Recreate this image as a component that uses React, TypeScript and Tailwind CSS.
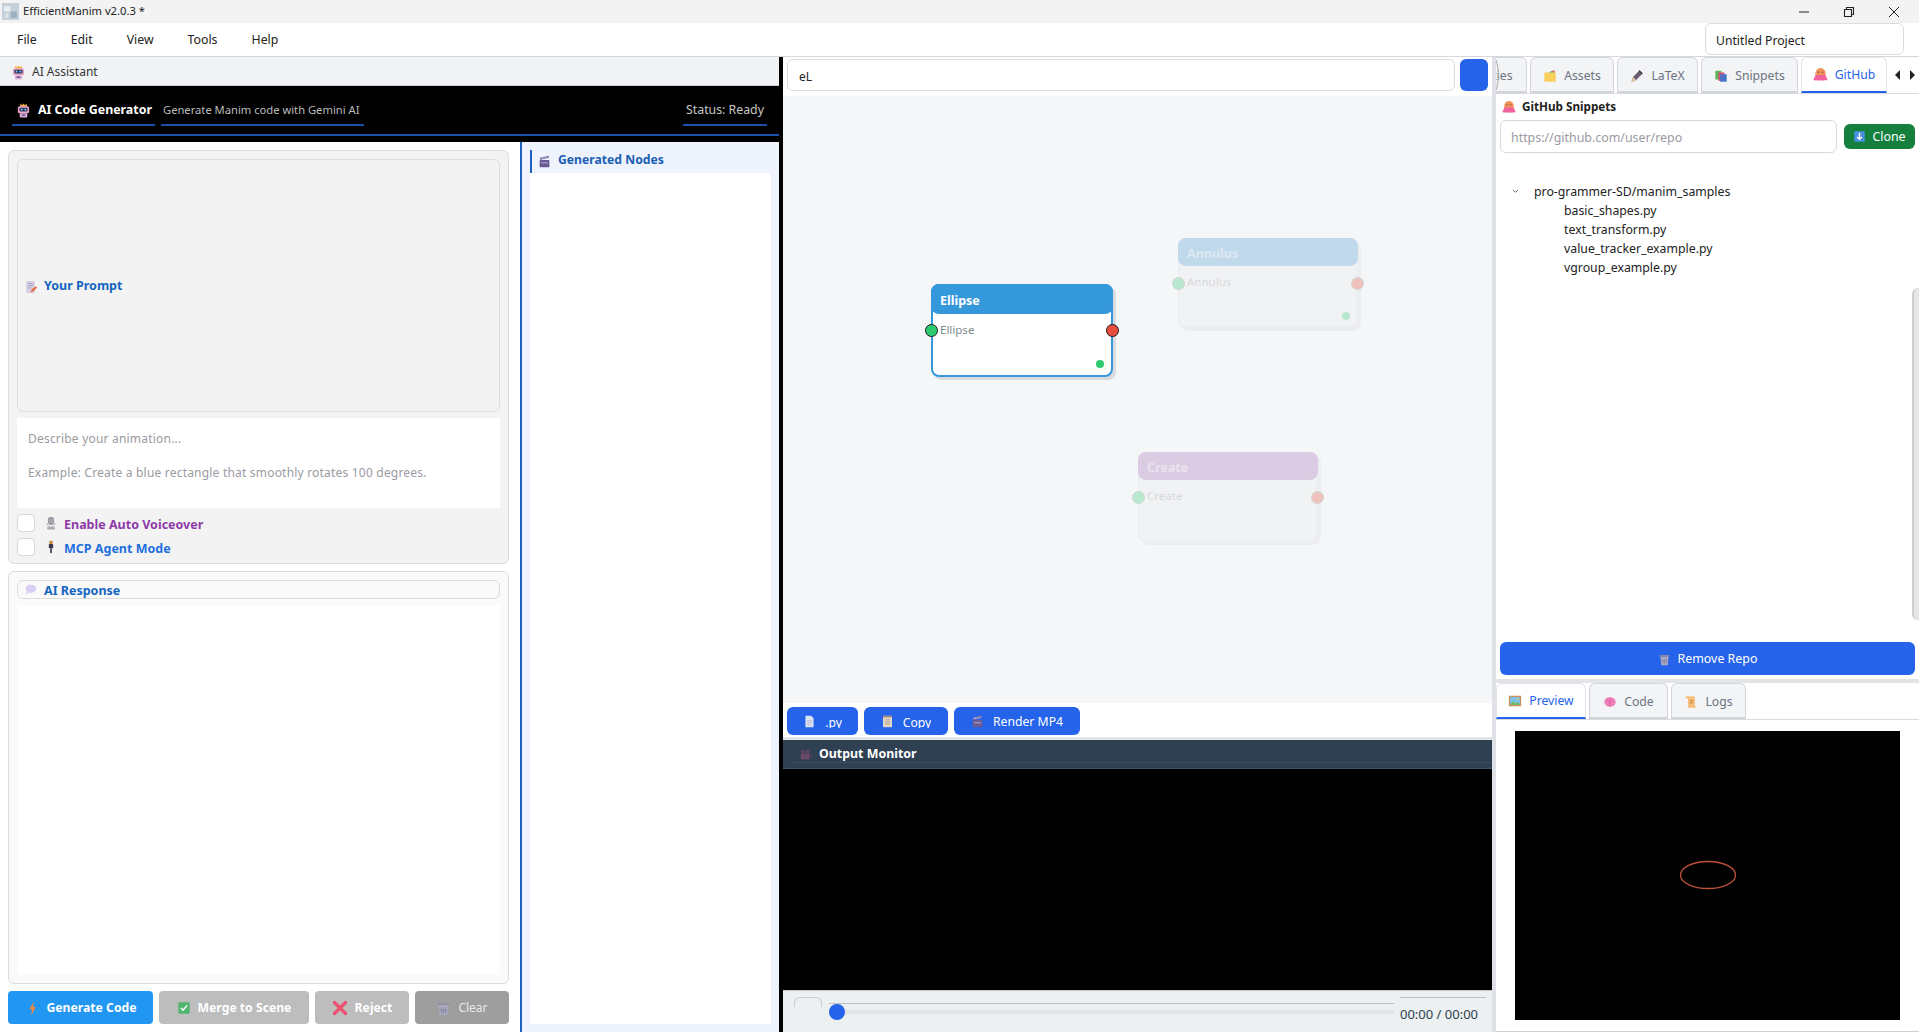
import React from "react";

type IP = { className?: string };
const S = ({ className = "w-[14px] h-[14px]", children }: IP & { children: React.ReactNode }) => (
  <svg viewBox="0 0 16 16" className={`${className} shrink-0`}>{children}</svg>
);

const Robot = ({ className }: IP) => (
  <S className={className}>
    <path d="M4.500 0.500l2 2L8 0.500l1.500 2 2-2V4h-7z" fill="#f2b632" />
    <rect x="2" y="3.500" width="12" height="7.500" rx="1.800" fill="#e9a6c6" />
    <rect x="3.500" y="5" width="9" height="4" rx="1.500" fill="#2f3a66" />
    <circle cx="6" cy="7" r="1" fill="#7fd0f0" />
    <circle cx="10" cy="7" r="1" fill="#7fd0f0" />
    <rect x="4" y="11" width="8" height="4.500" rx="1" fill="#e4b4dc" />
    <rect x="6" y="12.200" width="4" height="1.500" fill="#5a4a80" />
  </S>
);
const Clapper = ({ className }: IP) => (
  <S className={className}>
    <rect x="2" y="6" width="12" height="9" rx="1" fill="#6a5a96" />
    <path d="M2 3.500L13 1l.7 2.500L2.700 6z" fill="#8b7cb0" />
    <path d="M5 3l1.500 2M8.500 2.300l1.500 2" stroke="#ddd" strokeWidth="1" />
    <rect x="4" y="9" width="8" height="1.200" fill="#b9aed0" />
  </S>
);
const PromptIcon = ({ className }: IP) => (
  <S className={className}>
    <rect x="2.500" y="1" width="10" height="14" rx="1" fill="#d6d0e4" />
    <path d="M4.500 4h6M4.500 6.500h6M4.500 9h4" stroke="#a49bbd" strokeWidth="1" />
    <path d="M7.500 14l1-3 5-4 1.500 1.500-4.500 4.500z" fill="#ee6a3c" />
  </S>
);
const Mic = ({ className }: IP) => (
  <S className={className}>
    <rect x="4.500" y="1" width="7" height="9" rx="3.200" fill="#8d8d96" />
    <path d="M5 3.500h6M5 5.500h6M5 7.500h6" stroke="#c9c9d0" strokeWidth=".8" />
    <path d="M3.500 8c0 3 2 4.500 4.500 4.500S12.500 11 12.500 8" stroke="#a8a8b0" fill="none" />
    <rect x="3.500" y="12.500" width="9" height="2.800" rx="1" fill="#aaaab2" />
  </S>
);
const Plug = ({ className }: IP) => (
  <S className={className}>
    <rect x="6" y="1" width="4" height="3.500" fill="#c98a3a" />
    <rect x="5.500" y="4.500" width="5" height="5" rx="1" fill="#3d3550" />
    <rect x="7" y="9.500" width="2" height="5.500" fill="#4a4164" />
  </S>
);
const Bubble = ({ className }: IP) => (
  <S className={className}>
    <ellipse cx="8.500" cy="7" rx="6.500" ry="5" fill="#d8cdf2" />
    <path d="M3.500 10L2 13.500 7 11.500z" fill="#d8cdf2" />
  </S>
);
const Bolt = ({ className }: IP) => (
  <S className={className}>
    <path d="M9.500 0.500L4.500 9h3L6.500 15.500l5-9h-3z" fill="#f08a3c" />
  </S>
);
const Check = ({ className }: IP) => (
  <S className={className}>
    <rect x="1.500" y="1.500" width="13" height="13" rx="1" fill="#4fb56e" />
    <path d="M4.500 8l2.500 2.500 4.500-5.500" stroke="#fff" strokeWidth="1.700" fill="none" />
  </S>
);
const Cross = ({ className }: IP) => (
  <S className={className}>
    <path d="M2.500 2.500l11 11M13.500 2.500l-11 11" stroke="#ef4f6e" strokeWidth="3.200" strokeLinecap="round" />
  </S>
);
const Trash = ({ className }: IP) => (
  <S className={className}>
    <path d="M2 2.500h12v2H2z" fill="#8e8ca6" />
    <path d="M3 4.500h10l-1 10.500H4z" fill="#aeadc4" />
    <path d="M5.500 6l.500 8M8 6v8M10.500 6l-.500 8M4 8.500l8 3M12 8.500l-8 3" stroke="#7f7d9c" strokeWidth=".6" />
  </S>
);
const Octopus = ({ className }: IP) => (
  <S className={className}>
    <path d="M2.500 9C2 4 4.800 1 8 1s6 3 5.500 8z" fill="#f0925a" />
    <path d="M3 8.500h10l2.300 4c.4 2-2.300 2.500-2.800 1.200-.5 1.300-2.500 1.300-3 0-.5 1.300-2.500 1.300-3 0-.5 1.300-2.500 1.300-3 0-.5 1.300-3.200.8-2.800-1.200z" fill="#f2609e" />
    <circle cx="6" cy="5.500" r=".7" fill="#5a3030" />
    <circle cx="10" cy="5.500" r=".7" fill="#5a3030" />
  </S>
);
const Folder = ({ className }: IP) => (
  <S className={className}>
    <rect x="1.500" y="4" width="13" height="10.500" rx="1" fill="#f7cf5a" />
    <path d="M6 4l6-2.500 1 2.500z" fill="#5fb86a" />
    <path d="M9 3.500l4-2 .800 2.500z" fill="#ef6a5a" />
  </S>
);
const Pen = ({ className }: IP) => (
  <S className={className}>
    <path d="M1.500 15l2-6L11 1.500 14.500 5 7 12.500z" fill="#6b5b70" />
    <path d="M1.500 15l2-6 3.500 3.500z" fill="#e6c8a8" />
    <path d="M10 2.500L13.500 6l1-1L11 1.500z" fill="#3b3448" />
  </S>
);
const Books = ({ className }: IP) => (
  <S className={className}>
    <rect x="1.500" y="2" width="7" height="10" fill="#5cb85c" />
    <rect x="5" y="4" width="7" height="9.500" fill="#d94f7a" />
    <rect x="7" y="6" width="7.500" height="8.500" fill="#4a72c4" />
  </S>
);
const Down = ({ className }: IP) => (
  <S className={className}>
    <rect x="1.500" y="1.500" width="13" height="13" rx="1" fill="#4a90e2" />
    <path d="M8 3.500v8M5 8.500l3 3 3-3" stroke="#fff" strokeWidth="1.700" fill="none" />
  </S>
);
const Page = ({ className }: IP) => (
  <S className={className}>
    <path d="M3 1h7l3 3v11H3z" fill="#dce3f2" />
    <path d="M5 7h6M5 9.500h6M5 12h4" stroke="#a9b3cc" strokeWidth="1" />
  </S>
);
const Floppy = ({ className }: IP) => (
  <S className={className}>
    <rect x="2.500" y="1" width="11" height="14" fill="#e6d8c6" />
    <rect x="2.500" y="1" width="11" height="2" fill="#9a8a80" />
    <path d="M5 6h6M5 8.500h6M5 11h6" stroke="#a5957f" strokeWidth="1" />
  </S>
);
const Camera = ({ className }: IP) => (
  <S className={className}>
    <circle cx="5" cy="4.500" r="2.500" fill="#5f4460" />
    <circle cx="10.500" cy="4.500" r="2.500" fill="#5f4460" />
    <rect x="2" y="7" width="11" height="7" rx="1" fill="#6b4a68" />
    <path d="M13 9l2.500-1.500v6L13 12z" fill="#4f3a50" />
  </S>
);
const Picture = ({ className }: IP) => (
  <S className={className}>
    <rect x="1" y="2" width="14" height="12" fill="#c98f5c" />
    <rect x="2.500" y="3.500" width="11" height="9" fill="#7cc4ec" />
    <path d="M2.500 12.500L6 8l3 3 2-2 2.500 3.500z" fill="#6cbb5a" />
    <circle cx="11" cy="5.500" r="1" fill="#f7d04a" />
  </S>
);
const Brain = ({ className }: IP) => (
  <S className={className}>
    <ellipse cx="8" cy="8" rx="6.500" ry="5.500" fill="#ef7fb8" />
    <path d="M8 3v10M4.500 6c1.500 0 2 1 2 2M11.500 6c-1.500 0-2 1-2 2" stroke="#d9589c" strokeWidth=".8" fill="none" />
  </S>
);
const Scroll = ({ className }: IP) => (
  <S className={className}>
    <path d="M2 1.500h9c1 0 1.500.700 1.500 1.500v10h2c0 1-.500 1.500-1.500 1.500H6c-1 0-1.500-.700-1.500-1.500V4H2z" fill="#f6bf7e" />
    <path d="M6.500 6.500h4M6.500 9h4" stroke="#c9772f" strokeWidth="1" />
  </S>
);

const Tab = ({
  w, icon, children, active,
}: { w: string; icon: React.ReactNode; children: React.ReactNode; active?: boolean }) => (
  <div
    className={`${w} h-[36px] shrink-0 flex items-center justify-center gap-[7px] rounded-t-[6px] border border-b-0 text-[12.200px] ${
      active
        ? "bg-white border-[#e0e2e6] text-[#2563eb] border-b-2 border-b-[#2563eb]"
        : "bg-[#f3f4f6] border-[#d1d5db] text-[#6b7280] border-b-2 border-b-[#d1d5db] pt-[3px]"
    }`}
  >
    {icon}
    <span className={active ? "mt-[1px]" : ""}>{children}</span>
  </div>
);

const ActionBtn = ({
  w, bg, fg, icon, children,
}: { w: string; bg: string; fg: string; icon: React.ReactNode; children: React.ReactNode }) => (
  <button className={`${w} ${bg} ${fg} h-[33px] shrink-0 rounded-[4px] flex items-center justify-center gap-[7px] text-[12.200px] font-bold pt-[1px]`}>
    {icon}
    <span>{children}</span>
  </button>
);

const Port = ({ side, c, dim }: { side: string; c: string; dim?: boolean }) => (
  <div className={`absolute ${side} w-[13px] h-[13px] rounded-full border ${c} ${dim ? "border-[#7a8a80]" : "border-[#1a1a1a]"}`} />
);

const Node = ({ pos, title, header, dot, selected }: {
  pos: string; title: string; header: string; dot?: boolean; selected?: boolean;
}) => (
  <div
    className={`absolute ${pos} rounded-[8px] border-2 shadow-[3px_3px_0_#d9dbdf] ${
      selected ? "w-[182px] h-[93px] bg-white border-[#3498db]" : "w-[180px] h-[90px] opacity-30 bg-[#ebebee] border-[#dcdcdf]"
    }`}
  >
    <div className={`-mx-[2px] -mt-[2px] rounded-[8px] ${header} flex items-center pl-[9px] text-[12.500px] font-bold ${selected ? "h-[30px] pt-[5px] text-white" : "h-[28px] pt-[4px] text-white/50"}`}>
      {title}
    </div>
    <div className={`pl-[7px] pt-[7px] text-[11.500px] ${selected ? "text-[#7f8c8d]" : "text-[#8f9498]"}`}>{title}</div>
    <Port side={`left-[-8px] ${selected ? "top-[38px]" : "top-[37px]"}`} c="bg-[#2ecc71]" dim={!selected} />
    <Port side={`right-[-8px] ${selected ? "top-[38px]" : "top-[37px]"}`} c="bg-[#e74c3c]" dim={!selected} />
    {dot && <div className={`absolute w-[8px] h-[8px] rounded-full bg-[#2ecc71] ${selected ? "right-[7px] bottom-[7px]" : "right-[6px] bottom-[6px]"}`} />}
  </div>
);

const BlueBtn = ({ w, icon, children, clip }: { w: string; icon: React.ReactNode; children: React.ReactNode; clip?: boolean }) => (
  <button className={`${w} h-[28px] rounded-[6px] bg-[#2563eb] text-white text-[12.200px] flex items-center justify-center gap-[9px]`}>
    {icon}
    <span className={`block leading-[16px] ${clip ? "h-[13px] overflow-hidden" : "mt-[2px]"}`}>{children}</span>
  </button>
);

export default function App() {
  return (
    <div className="w-[1919px] h-[1032px] flex flex-col overflow-hidden bg-white text-[#222] [font-family:'Noto_Sans','Open_Sans',sans-serif]">
      {/* Title bar */}
      <div className="h-[23px] shrink-0 bg-[#f3f3f3] flex items-center text-[11.200px]">
        <svg viewBox="0 0 16 16" className="w-[17px] h-[17px] ml-[2px] mr-[4px]">
          <rect width="16" height="16" fill="#c3d0da" />
          <rect x="2" y="3" width="6" height="5" fill="#e8eef2" />
          <rect x="8" y="8" width="6" height="6" fill="#9eb0bd" />
          <rect x="3" y="10" width="3" height="4" fill="#dfe6ea" />
        </svg>
        <span>EfficientManim v2.0.3 *</span>
        <div className="ml-auto flex items-center h-full">
          <svg viewBox="0 0 14 14" className="w-[14px] h-[14px] mr-[31px]"><path d="M2 7h10" stroke="#222" strokeWidth="1" /></svg>
          <svg viewBox="0 0 14 14" className="w-[14px] h-[14px] mr-[31px]"><path d="M2.500 4.500h7v7h-7zM4.500 4.500V2.500h7v7h-2" stroke="#222" strokeWidth="1.100" fill="none" /></svg>
          <svg viewBox="0 0 14 14" className="w-[14px] h-[14px] mr-[18px]"><path d="M2 2l10 10M12 2L2 12" stroke="#222" strokeWidth="1" /></svg>
        </div>
      </div>

      {/* Menu bar */}
      <div className="h-[34px] shrink-0 bg-white border-b border-[#d5d7da] flex items-start text-[12.300px]">
        <div className="flex items-center h-[34px] pl-[17px] gap-[34px]">
          <span>File</span><span>Edit</span><span>View</span><span>Tools</span><span>Help</span>
        </div>
        <input
          readOnly
          value="Untitled Project"
          className="ml-auto mr-[15px] w-[199px] h-[32px] rounded-[6px] border border-[#dcdcdc] pl-[10px] pt-[2px] text-[12.200px] text-[#222] outline-none bg-white"
        />
      </div>

      {/* Main */}
      <div className="flex-1 min-h-0 flex">
        {/* Left column */}
        <div className="w-[783px] shrink-0 flex flex-col border-r-4 border-black">
          <div className="h-[29px] shrink-0 bg-[#f1f3f5] border-b border-[#cfd2d6] flex items-center pl-[11px] pt-[2px] gap-[6px] text-[12px] text-[#333]">
            <Robot className="w-[15px] h-[15px]" />
            <span>AI Assistant</span>
          </div>
          <div className="h-[56px] shrink-0 bg-black">
            <div className="h-[50px] border-b-2 border-[#1e4fa8] flex items-start px-[12px]">
              <div className="h-[40px] w-[143px] border-b-2 border-[#1e4fa8] flex items-center gap-[7px] pl-[4px] pt-[11px] text-[12.400px] font-bold text-white">
                <Robot className="w-[15px] h-[15px]" />
                <span>AI Code Generator</span>
              </div>
              <div className="h-[40px] w-[203px] ml-[6px] border-b-2 border-[#1e4fa8] flex items-center pl-[2px] pt-[11px] text-[11.200px] text-[#bbbbbb] whitespace-nowrap">
                Generate Manim code with Gemini AI
              </div>
              <div className="h-[40px] w-[84px] ml-auto border-b-2 border-[#1e4fa8] flex items-center justify-center pt-[11px] text-[12.300px] text-[#c8c8c8]">
                Status: Ready
              </div>
            </div>
          </div>

          <div className="flex-1 min-h-0 flex">
            {/* Prompt + response */}
            <div className="w-[522px] shrink-0 border-r-2 border-[#1e5fbf] bg-white flex flex-col gap-[7px] pt-[8px] pl-[8px] pr-[11px] pb-[8px]">
              <div className="h-[414px] shrink-0 rounded-[6px] border border-[#dcdcdc] bg-[#f3f3f3] px-[8px] pt-[8px] flex flex-col">
                <div className="h-[253px] shrink-0 rounded-[6px] border border-[#dddddd] flex items-center pl-[6px] pt-[2px] gap-[6px] text-[12.500px] font-bold text-[#1565c0]">
                  <PromptIcon className="w-[14px] h-[14px]" />
                  <span>Your Prompt</span>
                </div>
                <textarea
                  readOnly
                  className="mt-[6px] h-[90px] shrink-0 resize-none bg-white pl-[11px] pt-[12px] text-[12px] leading-[17px] tracking-[0.2px] placeholder:text-[#9a9aa2] outline-none"
                  placeholder={"Describe your animation...\n\nExample: Create a blue rectangle that smoothly rotates 100 degrees."}
                />
                <div className="mt-[6px] h-[18px] flex items-center gap-[9px] text-[12.500px] font-bold text-[#8e3aa8]">
                  <input type="checkbox" readOnly className="appearance-none w-[18px] h-[18px] rounded-[4px] border border-[#d6d6d6] bg-white" />
                  <Mic className="w-[14px] h-[14px]" />
                  <span className="ml-[-3px] mt-[4px]">Enable Auto Voiceover</span>
                </div>
                <div className="mt-[6px] h-[18px] flex items-center gap-[9px] text-[12.500px] font-bold text-[#1f6fe0]">
                  <input type="checkbox" readOnly className="appearance-none w-[18px] h-[18px] rounded-[4px] border border-[#d6d6d6] bg-white" />
                  <Plug className="w-[14px] h-[14px]" />
                  <span className="ml-[-3px] mt-[4px]">MCP Agent Mode</span>
                </div>
              </div>

              <div className="h-[413px] shrink-0 rounded-[6px] border border-[#dcdcdc] bg-[#fafafa] px-[8px] pt-[8px] pb-[8px] flex flex-col">
                <div className="h-[19px] shrink-0 rounded-[6px] border border-[#dddddd] flex items-center pl-[6px] gap-[7px] text-[12.500px] font-bold text-[#1565c0]">
                  <Bubble className="w-[13px] h-[13px]" />
                  <span className="mt-[3px]">AI Response</span>
                </div>
                <div className="mt-[6px] flex-1 bg-white" />
              </div>

              <div className="flex gap-[6px]">
                <ActionBtn w="w-[145px]" bg="bg-[#2196f3]" fg="text-white" icon={<Bolt className="w-[15px] h-[15px]" />}>Generate Code</ActionBtn>
                <ActionBtn w="w-[150px]" bg="bg-[#bdbdbd]" fg="text-white" icon={<Check />}>Merge to Scene</ActionBtn>
                <ActionBtn w="w-[94px]" bg="bg-[#bdbdbd]" fg="text-white" icon={<Cross className="w-[16px] h-[16px]" />}>Reject</ActionBtn>
                <button className="w-[94px] h-[33px] rounded-[4px] bg-[#9e9e9e] text-[#e8e8e8] flex items-center justify-center gap-[7px] text-[12px] pt-[1px]">
                  <Trash className="w-[15px] h-[15px]" />
                  <span>Clear</span>
                </button>
              </div>
            </div>

            {/* Generated nodes */}
            <div className="flex-1 min-w-0 bg-[#eff3fd] px-[8px] pt-[8px] pb-[8px] flex flex-col">
              <div className="h-[23px] shrink-0 border-l-2 border-[#1e5fbf] flex items-center pl-[6px] gap-[7px] text-[12.200px] font-bold text-[#1a5fb4]">
                <Clapper className="w-[13px] h-[13px]" />
                <span className="mb-[3px]">Generated Nodes</span>
              </div>
              <div className="flex-1 bg-white" />
            </div>
          </div>
        </div>

        {/* Middle column */}
        <div className="w-[713px] shrink-0 flex flex-col border-r-4 border-[#dfe1e6]">
          <div className="h-[39px] shrink-0 bg-white flex items-start pl-[4px] pt-[2px] gap-[5px]">
            <input
              readOnly
              value="eL"
              className="w-[668px] h-[32px] rounded-[6px] border border-[#dcdcdc] pl-[11px] pt-[2px] text-[12px] text-[#222] outline-none bg-white"
            />
            <button className="w-[28px] h-[32px] rounded-[6px] bg-[#2563eb]" />
          </div>
          <div className="h-[607px] shrink-0 bg-[#f5f6f8] relative">
            <Node pos="left-[148px] top-[188px]" title="Ellipse" header="bg-[#3498db]" dot selected />
            <Node pos="left-[395px] top-[142px]" title="Annulus" header="bg-[#4a98cf]" dot />
            <Node pos="left-[355px] top-[356px]" title="Create" header="bg-[#a46eb5]" />
          </div>
          <div className="h-[34px] shrink-0 bg-white flex items-start pl-[4px] pt-[4px] gap-[6px]">
            <BlueBtn w="w-[71px]" clip icon={<Page className="w-[13px] h-[13px]" />}>.py</BlueBtn>
            <BlueBtn w="w-[84px]" clip icon={<Floppy className="w-[13px] h-[13px]" />}>Copy</BlueBtn>
            <BlueBtn w="w-[126px]" icon={<Clapper className="w-[13px] h-[13px]" />}>Render MP4</BlueBtn>
          </div>
          <div className="h-[3px] shrink-0 bg-[#e2e4e7]" />
          <div className="h-[29px] shrink-0 bg-[#2f4053] border-b border-[#3f566c] pl-[10px] pt-[4px]">
            <div className="h-[19px] flex items-center gap-[7px] border-b border-[#3a4f63] text-[12.400px] font-bold text-white pl-[6px] pt-[2px]">
              <Camera className="w-[13px] h-[13px]" />
              <span>Output Monitor</span>
            </div>
          </div>
          <div className="flex-1 min-h-0 bg-black" />
          <div className="h-[42px] shrink-0 bg-[#ecf0f1] border-t border-[#c4c8ca] flex items-start pl-[11px]">
            <div className="w-[28px] h-[10px] mt-[6px] rounded-t-[6px] border border-b-0 border-[#c9cdcf]" />
            <div className="relative w-[565px] ml-[7px] mt-[12px] h-[20px] border-t border-[#bcc0c2]">
              <div className="absolute left-0 right-0 top-[6px] h-[4px] bg-[#e2e4e6]" />
              <div className="absolute left-0 top-0 w-[16px] h-[16px] rounded-full bg-[#2563eb]" />
            </div>
            <div className="ml-[6px] w-[86px] mt-[6px] border-t border-[#bcc0c2] pt-[8px] text-[13px] leading-[16px] text-[#2c3e50] whitespace-nowrap">
              00:00 / 00:00
            </div>
          </div>
        </div>

        {/* Right column */}
        <div className="flex-1 min-w-0 flex flex-col">
          <div className="h-[622px] shrink-0 flex flex-col relative">
            <div className="h-[37px] shrink-0 flex items-start border-b border-[#d8dade]">
              <div className="w-[391px] h-[36px] flex justify-end gap-[3px] overflow-hidden">
                <Tab w="w-[96px] pr-[12px]" icon={<PromptIcon className="w-[13px] h-[13px]" />}>Properties</Tab>
                <Tab w="w-[84px]" icon={<Folder className="w-[14px] h-[14px]" />}>Assets</Tab>
                <Tab w="w-[81px]" icon={<Pen className="w-[14px] h-[14px]" />}>LaTeX</Tab>
                <Tab w="w-[97px]" icon={<Books className="w-[14px] h-[14px]" />}>Snippets</Tab>
                <Tab w="w-[86px]" active icon={<Octopus className="w-[15px] h-[15px]" />}>GitHub</Tab>
              </div>
              <div className="flex items-center h-[36px] gap-[8px] pl-[8px]">
                <svg viewBox="0 0 6 10" className="w-[6px] h-[10px]"><path d="M5 0v10L0 5z" fill="#222" /></svg>
                <svg viewBox="0 0 6 10" className="w-[6px] h-[10px]"><path d="M1 0v10l5-5z" fill="#222" /></svg>
              </div>
            </div>
            <svg viewBox="0 0 4 30" className="absolute left-0 top-[3px] w-[4px] h-[30px]"><path d="M0 0c3 8 3 22 0 30" stroke="#aaa" fill="none" /></svg>
            <div className="h-[26px] shrink-0 flex items-center pl-[6px] gap-[6px] text-[11.700px] font-bold text-[#222]">
              <Octopus className="w-[14px] h-[14px]" />
              <span>GitHub Snippets</span>
            </div>
            <div className="flex items-center pl-[4px] gap-[7px] h-[33px] shrink-0">
              <input
                readOnly
                placeholder="https://github.com/user/repo"
                className="w-[337px] h-[33px] rounded-[6px] border border-[#d8d8d8] pl-[10px] pt-[2px] text-[12.400px] placeholder:text-[#9a9aa2] outline-none bg-white"
              />
              <button className="w-[71px] h-[25px] rounded-[6px] bg-[#15803d] text-white text-[12.400px] flex items-center justify-center gap-[6px]">
                <Down className="w-[13px] h-[13px]" />
                <span className="mt-[2px]">Clone</span>
              </button>
            </div>
            <div className="pt-[29px] pl-[16px] text-[12.300px] leading-[19px] text-[#222]">
              <div className="flex items-center">
                <svg viewBox="0 0 8 6" className="w-[7px] h-[5px] mr-[15px]"><path d="M1 1l3 3 3-3" stroke="#667" strokeWidth="1.200" fill="none" /></svg>
                <span>pro-grammer-SD/manim_samples</span>
              </div>
              <div className="pl-[52px]">
                <div>basic_shapes.py</div>
                <div>text_transform.py</div>
                <div>value_tracker_example.py</div>
                <div>vgroup_example.py</div>
              </div>
            </div>
            <div className="absolute right-0 top-[231px] w-[7px] h-[332px] rounded-l-[6px] bg-[#e6e6e6] border-l-2 border-[#cfcfcf]" />
            <button className="absolute left-[4px] top-[585px] w-[415px] h-[33px] rounded-[6px] bg-[#2563eb] text-white text-[12.400px] flex items-center justify-center gap-[7px] pt-[1px]">
              <Trash className="w-[13px] h-[13px]" />
              <span className="mt-[1px]">Remove Repo</span>
            </button>
          </div>
          <div className="h-[4px] shrink-0 bg-[#e2e4e7]" />
          <div className="flex-1 min-h-0 flex flex-col">
            <div className="h-[37px] shrink-0 flex items-start gap-[3px] border-b border-[#d8dade]">
              <Tab w="w-[90px]" active icon={<Picture className="w-[14px] h-[14px]" />}>Preview</Tab>
              <Tab w="w-[79px]" icon={<Brain className="w-[14px] h-[14px]" />}>Code</Tab>
              <Tab w="w-[75px]" icon={<Scroll className="w-[14px] h-[14px]" />}>Logs</Tab>
            </div>
            <div className="flex-1 min-h-0 pl-[19px] pt-[11px] border-b border-[#d0d2d6]">
              <svg viewBox="0 0 385 289" className="w-[385px] h-[289px] bg-black block">
                <ellipse cx="193" cy="144" rx="27.500" ry="13.500" fill="none" stroke="#c0503a" strokeWidth="1.300" />
              </svg>
            </div>
          </div>
        </div>
      </div>
    </div>
  );
}
